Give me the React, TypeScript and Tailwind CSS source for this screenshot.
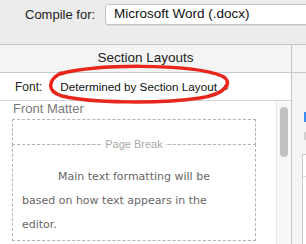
import React from "react";

const sans = { fontFamily: '"Liberation Sans", Arial, sans-serif' };

function UpDown() {
  return (
    <svg width="6" height="10" viewBox="0 0 6 10" className="ml-[6px] text-[#666]">
      <path d="M1 4L3 2L5 4M1 6L3 8L5 6" fill="none" stroke="currentColor" strokeWidth="1" strokeLinecap="round" strokeLinejoin="round" />
    </svg>
  );
}

export default function App() {
  return (
    <div
      className="relative h-[244px] w-[306px] overflow-hidden bg-[#ececec] text-[#222]"
      style={sans}
    >
      {/* compile bar */}
      <div className="flex h-[45px] items-start border-b border-[#c9c9c9]">
        <span className="ml-[25px] mt-[7px] shrink-0 whitespace-nowrap text-[13px] leading-[16px]">Compile for:</span>
        <div className="ml-[10px] mt-[4px] flex h-[21px] w-[220px] shrink-0 items-center whitespace-nowrap rounded-[3px] border border-[#c3c3c3] bg-white pl-[8px] text-[13.5px] text-[#111] shadow-[0_1px_0_#d8d8d8]">
          Microsoft Word (.docx)
        </div>
      </div>

      <div className="flex h-[199px]">
        {/* left panel */}
        <div className="flex w-[292px] shrink-0 flex-col border-r border-[#c4c4c4]">
          <div className="flex h-[28px] shrink-0 items-center justify-center border-b border-[#c9c9c9] bg-[#f4f4f4] text-[13.5px] text-[#222]">
            Section Layouts
          </div>
          <div className="flex h-[28px] shrink-0 items-center border-b border-[#d6d6d6] bg-white">
            <span className="ml-[15px] text-[12px]">Font:</span>
            <span className="ml-[18px] text-[11.7px] text-[#111]">Determined by Section Layout</span>
            <UpDown />
          </div>
          <div className="flex min-h-0 flex-1 bg-white">
            <div className="flex-1 pl-[12px]">
              <div className="pl-[1px] text-[13px] leading-[16px] text-[#7a7a7a]">Front Matter</div>
              <div className="mt-[2px] h-[26px] w-[244px] border border-dashed border-[#b4b4b4]" />
              <div className="relative -mt-px h-[97px] w-[244px] border border-dashed border-[#b4b4b4]">
                <span className="absolute left-1/2 top-[-8px] -translate-x-1/2 bg-white px-[3px] text-[11px] leading-[14px] text-[#a9a9a9]">
                  Page Break
                </span>
                <p
                  className="mt-[20px] pl-[9px] pr-[32px] text-[11px] leading-[24px] text-[#666] [text-indent:36px]"
                  style={{ fontFamily: '"DejaVu Sans", sans-serif' }}
                >
                  Main text formatting will be based on how text appears in the editor.
                </p>
              </div>
            </div>
            <div className="w-[15px] shrink-0 border-l border-[#e6e6e6] bg-[#f8f8f8] pl-[3px] pt-[6px]">
              <div className="h-[50px] w-[8px] rounded-full bg-[#c1c1c1]" />
            </div>
          </div>
        </div>

        {/* right column */}
        <div className="flex flex-1 flex-col bg-[#f4f4f4]">
          <div className="h-[28px] shrink-0 border-b border-[#c9c9c9]" />
          <div className="flex flex-1 flex-col items-end">
            <div className="mt-[39px] h-[10px] w-[2px] bg-[#3b8ef0]" />
            <div className="mt-[10px] h-[8px] w-[2px] bg-[#d0d0d0]" />
            <div className="ml-auto mt-[14px] h-[90px] w-[4px] border-l border-t border-[#c9c9c9] bg-white">
              <div className="mt-[21px] border-t border-[#d9d9d9]" />
            </div>
          </div>
        </div>
      </div>

      {/* red annotation */}
      <svg className="pointer-events-none absolute left-0 top-0" width="306" height="244">
        <path
          d="M60 74 C 90 64, 190 63, 222 76 C 234 82, 226 94, 200 98 C 160 104, 90 103, 62 96 C 46 91, 48 80, 61 73"
          fill="none"
          stroke="#e8261c"
          strokeWidth="3.5"
          strokeLinecap="round"
        />
      </svg>
    </div>
  );
}
